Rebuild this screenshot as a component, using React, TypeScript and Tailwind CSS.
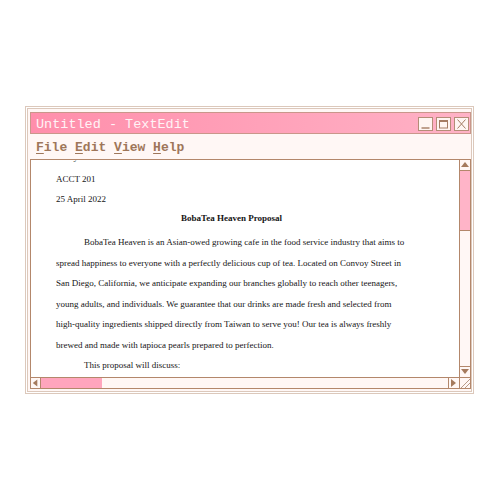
const brown = "border-[#b3876b]";

function TitleButton({ kind }: { kind: "min" | "max" | "close" }) {
  return (
    <span className="flex h-[14px] w-[15px] items-center justify-center border border-[#b58c77] bg-[#fff5f2]">
      <svg width="13" height="12" viewBox="0 0 13 12" fill="none" stroke="#a57c64">
        {kind === "min" && <path d="M2.5 10h8" strokeWidth="1.4" />}
        {kind === "max" && (
          <>
            <rect x="2.5" y="2.5" width="8" height="7.5" strokeWidth="1" />
            <path d="M2.5 3h8" strokeWidth="2" />
          </>
        )}
        {kind === "close" && <path d="M2.5 1.5l8 9M10.5 1.5l-8 9" strokeWidth="1" />}
      </svg>
    </span>
  );
}

function Arrow({ dir }: { dir: "up" | "down" | "left" | "right" }) {
  const pts = {
    up: "1,7 5,2 9,7",
    down: "1,2 5,7 9,2",
    left: "7,1 2,5 7,9",
    right: "2,1 7,5 2,9",
  }[dir];
  return (
    <svg width="10" height="10" viewBox="0 0 10 10">
      <polygon points={pts} fill="#a57a5d" />
    </svg>
  );
}

const paragraph = [
  "spread happiness to everyone with a perfectly delicious cup of tea. Located on Convoy Street in",
  "San Diego, California, we anticipate expanding our branches globally to reach other teenagers,",
  "young adults, and individuals. We guarantee that our drinks are made fresh and selected from",
  "high-quality ingredients shipped directly from Taiwan to serve you! Our tea is always freshly",
  "brewed and made with tapioca pearls prepared to perfection.",
];

export default function App() {
  return (
    <div className="min-h-screen bg-white pl-[25px] pt-[106px]">
      <div className="h-[288px] w-[449px] border border-[#dcc8bb] p-px">
        <div className="flex h-full flex-col border border-[#dcc8bb] bg-[#fff7f5] pb-[2px] pl-[2px] pt-[3px]">
          {/* title bar */}
          <div className="flex h-[22px] items-center justify-between border border-[#c9968a] bg-gradient-to-r from-[#ff8eab] to-[#ffb2c6] pl-[5px] pr-[1px] pt-[2px]">
            <span className="pt-[2px] font-['Liberation_Mono',monospace] text-[13.5px] leading-none text-[#fff3f6]">
              Untitled - TextEdit
            </span>
            <div className="flex gap-[3px]">
              <TitleButton kind="min" />
              <TitleButton kind="max" />
              <TitleButton kind="close" />
            </div>
          </div>

          {/* menu */}
          <div className="flex h-[25px] items-center pl-[6px] pt-[2px] font-['Liberation_Mono',monospace] text-[13px] font-bold whitespace-pre text-[#9e7659]">
            <span className="underline underline-offset-2">F</span>ile{" "}
            <span className="underline underline-offset-2">E</span>dit{" "}
            <span className="underline underline-offset-2">V</span>iew{" "}
            <span className="underline underline-offset-2">H</span>elp
          </div>

          {/* document area */}
          <div className={`grid flex-1 grid-cols-[1fr_11px] grid-rows-[1fr_11px] border ${brown} bg-white`}>
            <div className="overflow-hidden pl-[25px] font-['Liberation_Serif',serif] text-[9px] text-[#151515]">
              <div className="-mt-[12px] w-[351px]">
                <div className="leading-[19.5px]">Emily Chen</div>
                <div className="mt-[2.5px] leading-[19.5px]">ACCT 201</div>
                <div className="leading-[19.5px]">25 April 2022</div>
                <div className="text-center font-bold leading-[19.5px]">BobaTea Heaven Proposal</div>
                <div className="mt-[3.5px] whitespace-nowrap leading-[20.5px]">
                  <div className="pl-[28px]">
                    BobaTea Heaven is an Asian-owed growing cafe in the food service industry that aims to
                  </div>
                  {paragraph.map((line) => (
                    <div key={line}>{line}</div>
                  ))}
                  <div className="pl-[28px]">This proposal will discuss:</div>
                </div>
              </div>
            </div>

            {/* vertical scrollbar */}
            <div className={`flex flex-col border-l ${brown} bg-[#fff7f5]`}>
              <div className={`flex h-[11px] items-center justify-center border-b ${brown}`}>
                <Arrow dir="up" />
              </div>
              <div className={`h-[60px] border-b ${brown} bg-[#ffb4c8]`} />
              <div className="flex-1" />
              <div className={`flex h-[11px] items-center justify-center border-t ${brown}`}>
                <Arrow dir="down" />
              </div>
            </div>

            {/* horizontal scrollbar */}
            <div className={`flex border-t ${brown} bg-[#fff7f5]`}>
              <div className={`flex w-[10px] items-center justify-center border-r ${brown}`}>
                <Arrow dir="left" />
              </div>
              <div className="w-[61px] bg-[#ffa5bd]" />
              <div className="flex-1" />
              <div className={`flex w-[11px] items-center justify-center border-l ${brown}`}>
                <Arrow dir="right" />
              </div>
            </div>

            {/* resize grip */}
            <div className={`flex items-end justify-end border-l border-t ${brown} bg-[#fff7f5]`}>
              <svg width="10" height="10" viewBox="0 0 10 10" stroke="#b79a88" strokeWidth="1">
                <path d="M1 10L10 1M5 10L10 5" />
              </svg>
            </div>
          </div>
        </div>
      </div>
    </div>
  );
}
